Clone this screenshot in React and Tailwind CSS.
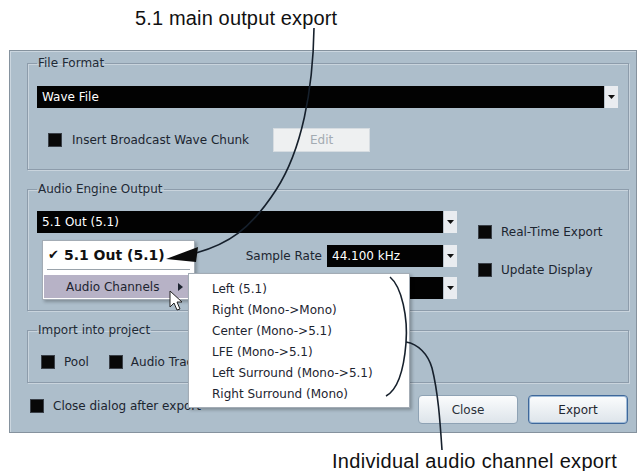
import React from 'react';

const ui = { fontFamily: '"DejaVu Sans", Verdana, sans-serif' };
const caption = { fontFamily: '"Liberation Sans", Arial, sans-serif' };

function Check({ className = '' }) {
    return <span className={`block w-[14px] h-[14px] shrink-0 bg-[#080808] border border-[#3a4048] ${className}`} />;
}

function Arrow() {
    return (
        <span className="w-[14px] self-stretch shrink-0 bg-[#e9ecf0] border-l border-[#b7c1ca] flex items-center justify-center">
            <svg width="7" height="4" viewBox="0 0 7 4"><path d="M0 0h7L3.5 4z" fill="#111" /></svg>
        </span>
    );
}

function Field({ value, className = '' }) {
    return (
        <div className={`flex h-[22px] ${className}`}>
            <div className="flex-1 bg-[#020202] text-white text-[12px] leading-[22px] pl-[5px] truncate">{value}</div>
            <Arrow />
        </div>
    );
}

function Group({ title, className = '', children }) {
    return (
        <fieldset className={`border border-[#8d9cab] shadow-[inset_1px_1px_0_#c9d4dd,1px_1px_0_#c9d4dd] px-[9px] ${className}`}>
            <legend className="px-[1px] text-[12px] leading-[14px] text-[#1f2a36]">{title}</legend>
            {children}
        </fieldset>
    );
}

const channels = [
    'Left (5.1)',
    'Right (Mono->Mono)',
    'Center (Mono->5.1)',
    'LFE (Mono->5.1)',
    'Left Surround (Mono->5.1)',
    'Right Surround (Mono)',
];

export default function App() {
    return (
        <div className="w-[640px] h-[471px] bg-white relative overflow-hidden">
            {/* caption above */}
            <div style={caption} className="h-[50px] pt-[6px] pl-[135px] text-[20px] leading-[24px] tracking-[0.15px] text-[#111]">
                5.1 main output export
            </div>

            {/* export dialog */}
            <div style={ui} className="ml-[9px] w-[628px] h-[383px] bg-[#adbecb] border border-[#85929e] shadow-[inset_1px_1px_0_#cbd6df] pl-[17px] pr-[7px] pt-[5px] flex flex-col text-[12px] text-[#1c2530]">
                <Group title="File Format" className="pb-[17px]">
                    <Field value="Wave File" className="mt-[16px] mr-[1px]" />
                    <div className="flex items-center mt-[20px] h-[24px]">
                        <Check className="ml-[11px]" />
                        <span className="ml-[10px]">Insert Broadcast Wave Chunk</span>
                        <button className="ml-[24px] w-[97px] h-[24px] bg-[#eef0f1] border border-[#d6dce1] text-[#a3abb2]">Edit</button>
                    </div>
                </Group>

                <Group title="Audio Engine Output" className="mt-[12px] pb-[11px]">
                    <div className="flex mt-[15px]">
                        <div className="w-[420px] flex flex-col">
                            <Field value="5.1 Out (5.1)" className="h-[21px]" />
                            <div className="flex items-center justify-end mt-[12px]">
                                <span className="mr-[5px]">Sample Rate</span>
                                <Field value="44.100 kHz" className="w-[130px]" />
                            </div>
                            <div className="flex justify-end mt-[10px]">
                                <Field value="24 Bit" className="w-[130px] h-[21px]" />
                            </div>
                        </div>
                        <div className="ml-[21px] pt-[12px] flex flex-col gap-[20px]">
                            <div className="flex items-center gap-[9px]"><Check /><span>Real-Time Export</span></div>
                            <div className="flex items-center gap-[9px]"><Check /><span>Update Display</span></div>
                        </div>
                    </div>
                </Group>

                <Group title="Import into project" className="mt-[12px] pb-[13px]">
                    <div className="flex items-center mt-[18px] h-[14px] pl-[4px]">
                        <Check />
                        <span className="ml-[9px]">Pool</span>
                        <Check className="ml-[20px]" />
                        <span className="ml-[8px]">Audio Track</span>
                    </div>
                </Group>

                <div className="flex mt-[12px] h-[29px] pr-[1px]">
                    <div className="flex items-center self-start mt-[4px] h-[14px]">
                        <Check className="ml-[3px]" />
                        <span className="ml-[9px]">Close dialog after export</span>
                    </div>
                    <button className="ml-auto w-[100px] h-[29px] rounded-[4px] border border-[#8ea2b4] bg-gradient-to-b from-[#fbfcfd] to-[#dde4ea] text-[#2a3038]">Close</button>
                    <button className="ml-[10px] w-[100px] h-[29px] rounded-[4px] border border-[#3e679a] shadow-[inset_0_0_0_1px_#9fbbd8] bg-gradient-to-b from-[#fbfcfd] to-[#dde4ea] text-[#1f2630]">Export</button>
                </div>
            </div>

            {/* caption below */}
            <div style={caption} className="mt-[18px] pl-[332px] text-[20px] leading-[20px] tracking-[0.3px] text-[#111]">
                Individual audio channel export
            </div>

            {/* output popup menu */}
            <div style={ui} className="absolute left-[42px] top-[240px] w-[153px] h-[60px] bg-white border border-[#a3acb5] shadow-[2px_2px_3px_rgba(0,0,0,0.25)] z-10">
                <div className="h-[28px] flex items-center pl-[5px] text-[14px] font-bold text-[#111]">
                    <span className="text-[13px] font-bold mr-[5px]">✔</span>5.1 Out (5.1)
                </div>
                <div className="mx-[4px] border-t border-[#9aa3ab] border-b border-b-white" />
                <div className="mt-[4px] mx-[1px] h-[23px] bg-[#b7b2c6] flex items-center pl-[22px] text-[12px] text-[#1d2430]">
                    Audio Channels
                    <svg className="ml-auto mr-[10px]" width="5" height="8" viewBox="0 0 5 8"><path d="M0 0l5 4-5 4z" fill="#1d2430" /></svg>
                </div>
            </div>

            {/* channel submenu */}
            <div style={ui} className="absolute left-[188px] top-[273px] w-[222px] h-[135px] bg-white border border-[#a3acb5] shadow-[2px_2px_3px_rgba(0,0,0,0.25)] z-20 pt-[5px] pl-[23px] text-[12px] text-[#1d2430]">
                {channels.map(c => (
                    <div key={c} className="h-[21px] leading-[21px]">{c}</div>
                ))}
            </div>

            {/* callout strokes */}
            <svg className="absolute inset-0 pointer-events-none z-30" width="640" height="471" viewBox="0 0 640 471">
                <path d="M314 28 C313 90 302 150 276 190 S228 244 196 253" fill="none" stroke="#16202c" strokeWidth="1.6" />
                <path d="M166 259 L198 247 L196 262 Z" fill="#0b0b0b" />
                <path d="M390 277 C402 287 408 318 406 343 C404 368 399 389 386 396" fill="none" stroke="#16202c" strokeWidth="1.6" />
                <path d="M406 342 C418 344 428 354 432 368 C438 392 440 420 442 450" fill="none" stroke="#16202c" strokeWidth="1.6" />
                {/* mouse pointer */}
                <path d="M170 291 L170 307 L174 303 L177 310 L180 309 L177 302 L182 302 Z" fill="#fff" stroke="#222" strokeWidth="1" strokeLinejoin="round" />
            </svg>
        </div>
    );
}
